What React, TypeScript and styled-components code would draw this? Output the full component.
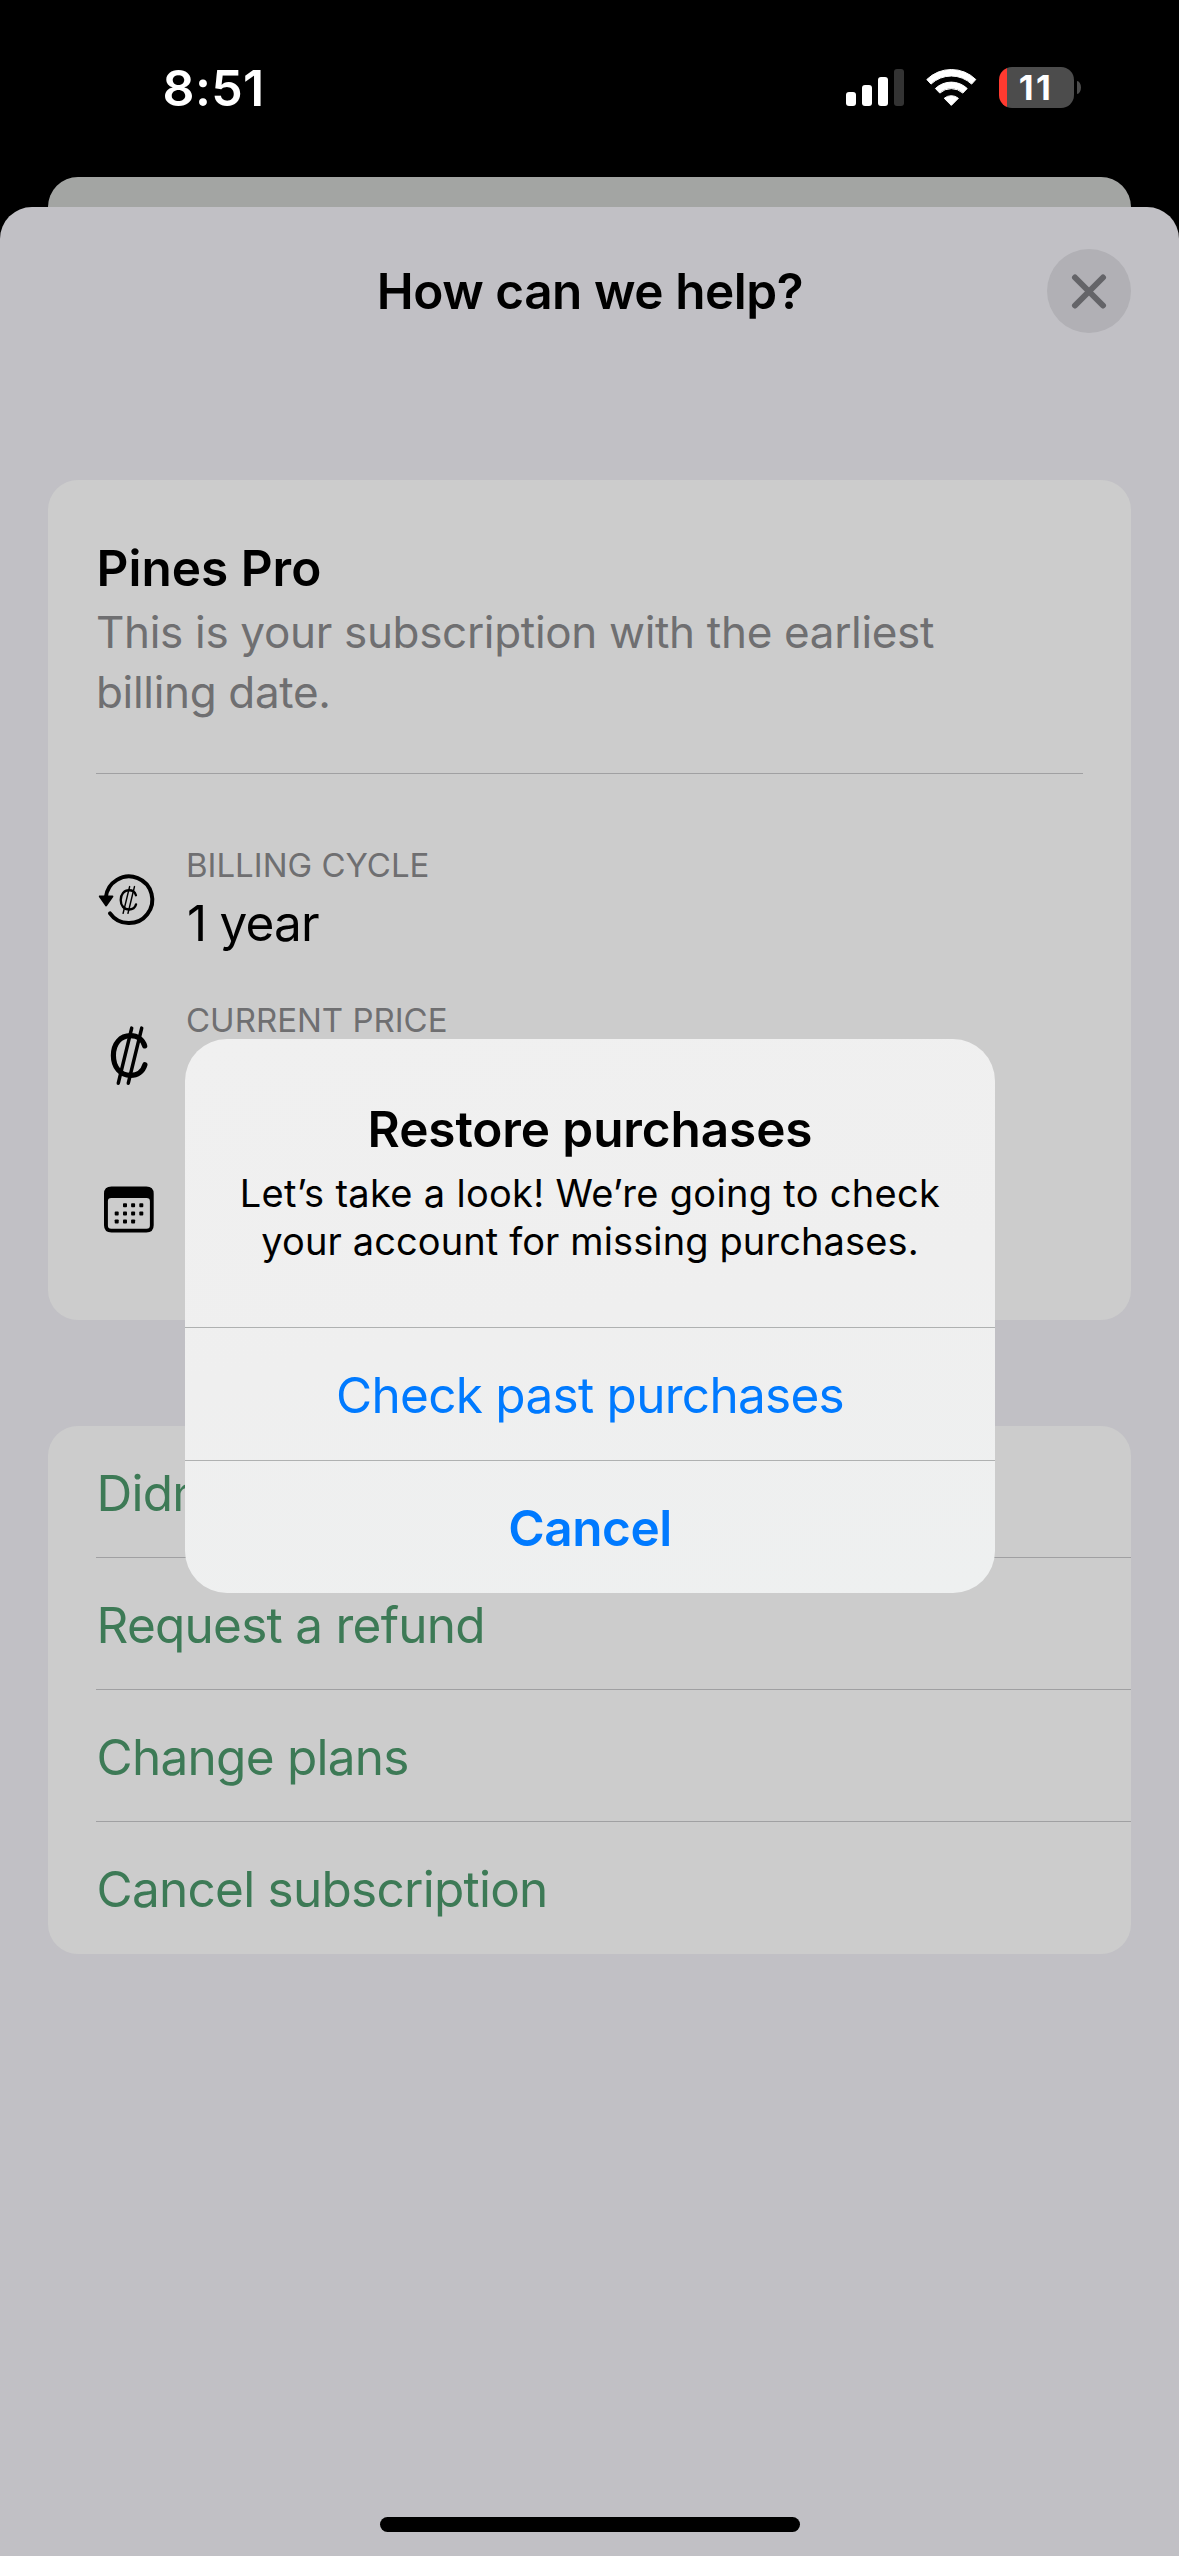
import React from "react";
import styled, { createGlobalStyle } from "styled-components";

const GlobalStyle = createGlobalStyle`
  *, *::before, *::after { box-sizing: border-box; }
  body { margin: 0; background: #000; }
  button { border: 0; margin: 0; padding: 0; background: none; font: inherit; color: inherit; }
`;

const Screen = styled.div`
  position: relative;
  display: flex;
  flex-direction: column;
  width: 1179px;
  height: 2556px;
  overflow: hidden;
  background: #000;
  color: #000;
  font-family: Inter, "Liberation Sans", sans-serif;
  font-size: 49.5px;
  line-height: 60px;
`;

/* Status bar */

const StatusBar = styled.div`
  display: flex;
  align-items: center;
  justify-content: space-between;
  height: 175px;
  margin-bottom: 2px;
  padding: 0 98px 0 162.5px;
  color: #fff;
`;

const Clock = styled.span`
  font-size: 50px;
  font-weight: 600;
  letter-spacing: 0.4px;
`;

const StatusIcons = styled.div`
  display: flex;
  align-items: center;
  gap: 22px;
`;

const Signal = styled.div`
  display: flex;
  align-items: flex-end;
  gap: 6px;
  height: 37px;
`;

const SignalBar = styled.span<{ $height: number; $on: boolean }>`
  width: 10px;
  height: ${(p) => p.$height}px;
  border-radius: 3px;
  background: ${(p) => (p.$on ? "#fff" : "#333")};
`;

const Battery = styled.div`
  display: flex;
  align-items: center;
  gap: 3px;
`;

const BatteryBody = styled.div`
  display: flex;
  align-items: center;
  justify-content: center;
  width: 75px;
  height: 41px;
  padding-right: 1px;
  border-radius: 13px;
  background: linear-gradient(to right, #ff3a30 8px, #4c4c4c 8px);
  font-size: 34.4px;
  font-weight: 700;
  letter-spacing: 2.5px;
  font-kerning: none;
  line-height: 41px;
`;

const BatteryCap = styled.span`
  width: 4px;
  height: 13px;
  border-radius: 0 4px 4px 0 / 0 6.5px 6.5px 0;
  background: #4c4c4c;
`;

/* Sheets */

const BackSheet = styled.div`
  flex: none;
  height: 30px;
  margin: 0 48px;
  border-radius: 30px 30px 0 0;
  background: #a3a5a3;
`;

const Sheet = styled.main`
  flex: 1;
  display: flex;
  flex-direction: column;
  padding: 0 48px 24px;
  border-radius: 32px 32px 0 0;
  background: #c1c0c5;
`;

const SheetHeader = styled.header`
  display: grid;
  grid-template-columns: 84px 1fr 84px;
  align-items: center;
  height: 168px;
  margin-bottom: 105px;
`;

const SheetTitle = styled.h1`
  grid-column: 2;
  margin: 0;
  padding-left: 1px;
  font-size: inherit;
  font-weight: 600;
  letter-spacing: -0.45px;
  text-align: center;
`;

const CloseButton = styled.button`
  display: grid;
  place-items: center;
  width: 84px;
  height: 84px;
  border-radius: 50%;
  background: #b1b0b5;
  color: #646468;
`;

const Card = styled.section`
  border-radius: 30px;
  background: #ccc;
`;

const PlanCard = styled(Card)`
  height: 840px;
  margin-bottom: 106px;
  padding: 58px 48px 0;
`;

const PlanName = styled.h2`
  margin: 0 0 4px;
  padding-left: 0.6px;
  font-size: inherit;
  font-weight: 600;
`;

const PlanNote = styled.p`
  margin: 0;
  padding-bottom: 51px;
  border-bottom: 1px solid #a0a0a2;
  color: #6f6f71;
  font-size: 44px;
  letter-spacing: -0.32px;
`;

const Details = styled.div`
  display: flex;
  flex-direction: column;
  gap: 42px;
  padding-top: 69px;
`;

const Detail = styled.div`
  display: grid;
  grid-template-columns: 66px 1fr;
  align-items: center;
  gap: 24px;
  height: 113px;
`;

const DetailText = styled.div`
  display: flex;
  flex-direction: column;
  gap: 3px;
  height: 113px;
`;

const DetailLabel = styled.span`
  color: #6f6f71;
  font-size: 33px;
  line-height: 44px;
`;

const DetailValue = styled.span`
  padding-left: 1px;
  line-height: 66px;
  letter-spacing: -0.8px;
`;

const ActionCard = styled(Card)`
  padding-left: 48px;
`;

const Action = styled.button`
  display: block;
  width: 100%;
  height: 132px;
  padding: 2px 0 0 0.5px;
  color: #3d7a56;
  letter-spacing: -0.74px;
  text-align: left;

  &:not(:last-child) {
    border-bottom: 1px solid #a0a0a2;
  }
`;

const HomeIndicator = styled.div`
  align-self: center;
  width: 420px;
  height: 15px;
  margin-top: auto;
  border-radius: 8px;
  background: #000;
`;

/* Alert */

const Alert = styled.div`
  position: absolute;
  top: 1039px;
  left: 185px;
  width: 810px;
  border-radius: 42px;
  background: linear-gradient(170deg, #f0f0f0, #efefef 50%, #eef0f0);
  text-align: center;
`;

const AlertBody = styled.div`
  height: 288px;
  padding-top: 60px;
`;

const AlertTitle = styled.h2`
  margin: 0 0 10px;
  font-size: inherit;
  font-weight: 600;
  letter-spacing: -0.1px;
`;

const AlertMessage = styled.p`
  margin: 0;
  font-size: 38px;
  line-height: 48px;
`;

const MessageLine = styled.span<{ $tracking: number }>`
  display: block;
  letter-spacing: ${(p) => p.$tracking}px;
`;

const AlertButton = styled.button<{ $strong?: boolean }>`
  display: block;
  width: 100%;
  height: 133px;
  padding-top: 1px;
  border-top: 1px solid #afb1b1;
  color: #007aff;
  font-weight: ${(p) => (p.$strong ? 600 : 400)};
  letter-spacing: ${(p) => (p.$strong ? -0.45 : -0.72)}px;
`;

const WifiIcon = () => (
  <svg width="51" height="37" viewBox="0 0 51 37" fill="#fff" stroke="#fff" strokeWidth="1" strokeLinejoin="round">
    <path d="M.8 10.4A35 35 0 0 1 49.8 10.4L45.6 15A29.5 29.5 0 0 0 5 15Z" transform="translate(0 .1)" />
    <path d="M9.4 19.5A23 23 0 0 1 41.2 19.5L36.8 24.1A17 17 0 0 0 13.8 24.1Z" />
    <path d="M18.2 29.3A11 11 0 0 1 32.4 29.3L25.3 36.4Z" />
  </svg>
);

const CloseIcon = () => (
  <svg width="36" height="36" viewBox="0 0 36 36" stroke="currentColor" strokeWidth="6" strokeLinecap="round">
    <path d="M4 4.5L32 32.5M32 4.5L4 32.5" />
  </svg>
);

const C_CURVE =
  "M46.7 27.4C44.7 20.7 39.2 17.2 32.6 17.2C22.3 17.2 15.4 25.1 15.4 37C15.4 48.9 22.3 56.8 32.6 56.8C39.4 56.8 44.9 53.1 46.9 46.2";
const C_BARS = "M33.7 9.6L20.3 64.7M43.7 9.6L30.3 64.7";

const ColonIcon = () => (
  <svg width="66" height="76" viewBox="-2 -1.5 66 76" fill="none" stroke="#000" strokeLinecap="round">
    <path d={C_CURVE} strokeWidth="5.2" />
    <path d={C_BARS} strokeWidth="3.5" />
  </svg>
);

const BillingCycleIcon = () => (
  <svg width="66" height="70" viewBox="-2 -1.5 66 70" fill="none" stroke="#000" strokeLinecap="round">
    <path d="M7.8 31A23.3 23.3 0 1 1 12 46.8" strokeWidth="4" />
    <path d="M1.8 29.9H14.4L8.1 38.9Z" fill="#000" strokeWidth="2" strokeLinejoin="round" />
    <g transform="translate(30.3 33.5) scale(.486) translate(-31 -37.2)">
      <path d={C_CURVE} strokeWidth="4.8" />
      <path d={C_BARS} strokeWidth="3" />
    </g>
  </svg>
);

const CALENDAR_DOTS = [
  [27, 28.7], [35.1, 28.7], [43.3, 28.7],
  [18.7, 37], [27, 37], [35.1, 37], [43.3, 37],
  [18.7, 44.9], [27, 44.9], [35.1, 44.9],
];

const CalendarIcon = () => (
  <svg width="66" height="70" viewBox="-2 -1.5 66 70">
    <path
      fillRule="evenodd"
      d="M13.5 10H48.3Q55.7 10 55.7 17.2V48.8Q55.7 56 48.3 56H13.5Q6 56 6 48.8V17.2Q6 10 13.5 10ZM13.2 21.5Q9.9 21.5 9.9 24.7V48.9Q9.9 52.2 13.2 52.2H48.6Q51.9 52.2 51.9 48.9V24.7Q51.9 21.5 48.6 21.5Z"
    />
    {CALENDAR_DOTS.map(([x, y]) => (
      <rect key={`${x}-${y}`} x={x - 2} y={y - 2} width="4" height="4" rx="0.9" />
    ))}
  </svg>
);

const details = [
  { icon: <BillingCycleIcon />, label: "BILLING CYCLE", value: "1 year" },
  { icon: <ColonIcon />, label: "CURRENT PRICE" },
  { icon: <CalendarIcon /> },
];

const actions = ["Didn’t", "Request a refund", "Change plans", "Cancel subscription"];

const signal = [
  { height: 14, on: true },
  { height: 21, on: true },
  { height: 29, on: true },
  { height: 37, on: false },
];

export default function App() {
  return (
    <>
      <GlobalStyle />
      <Screen>
        <StatusBar>
          <Clock>8:51</Clock>
          <StatusIcons>
            <Signal>
              {signal.map((bar) => (
                <SignalBar key={bar.height} $height={bar.height} $on={bar.on} />
              ))}
            </Signal>
            <WifiIcon />
            <Battery>
              <BatteryBody>11</BatteryBody>
              <BatteryCap />
            </Battery>
          </StatusIcons>
        </StatusBar>
        <BackSheet />
        <Sheet>
          <SheetHeader>
            <SheetTitle>How can we help?</SheetTitle>
            <CloseButton aria-label="Close">
              <CloseIcon />
            </CloseButton>
          </SheetHeader>
          <PlanCard>
            <PlanName>Pines Pro</PlanName>
            <PlanNote>
              This is your subscription with the earliest
              <br />
              billing date.
            </PlanNote>
            <Details>
              {details.map((item, i) => (
                <Detail key={i}>
                  {item.icon}
                  <DetailText>
                    {item.label && <DetailLabel>{item.label}</DetailLabel>}
                    {item.value && <DetailValue>{item.value}</DetailValue>}
                  </DetailText>
                </Detail>
              ))}
            </Details>
          </PlanCard>
          <ActionCard>
            {actions.map((label) => (
              <Action key={label}>{label}</Action>
            ))}
          </ActionCard>
          <HomeIndicator />
        </Sheet>
        <Alert role="alertdialog">
          <AlertBody>
            <AlertTitle>Restore purchases</AlertTitle>
            <AlertMessage>
              <MessageLine $tracking={0.31}>Let’s take a look! We’re going to check</MessageLine>
              <MessageLine $tracking={0.11}>your account for missing purchases.</MessageLine>
            </AlertMessage>
          </AlertBody>
          <AlertButton>Check past purchases</AlertButton>
          <AlertButton $strong>Cancel</AlertButton>
        </Alert>
      </Screen>
    </>
  );
}
